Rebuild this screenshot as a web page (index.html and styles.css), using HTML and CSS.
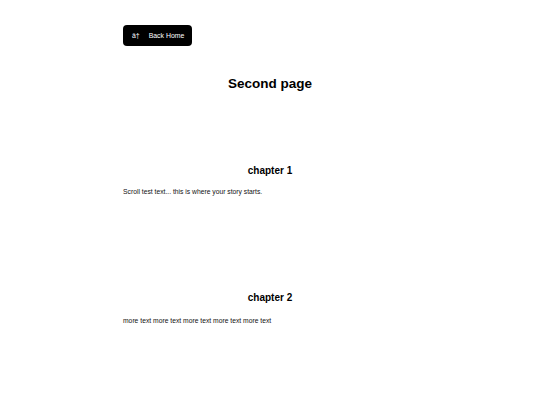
FILE: index.html
```html
<!DOCTYPE html>
<html>
<head>
<meta charset="utf-8">
<link rel="stylesheet" href="styles.css">
</head>
<body>
<div class="page">
  <a class="back" href="#"><span class="arrow">â†</span><span>Back Home</span></a>
  <h1 class="title">Second page</h1>
  <section class="chapter first">
    <h2 class="chapter-title">chapter 1</h2>
    <p class="text">Scroll test text... this is where your story starts.</p>
  </section>
  <section class="chapter second">
    <h2 class="chapter-title">chapter 2</h2>
    <p class="text text-second">more text more text more text more text more text</p>
  </section>
</div>
</body>
</html>
```

FILE: styles.css
```css
html, body {
  margin: 0;
  padding: 0;
  background: #ffffff;
}
body {
  font-family: "Liberation Sans", Arial, sans-serif;
  color: #000;
}
.page {
  width: 294px;
  margin: 0 auto;
  padding-top: 25px;
  display: flex;
  flex-direction: column;
  align-items: flex-start;
}
.back {
  display: inline-flex;
  align-items: center;
  gap: 9px;
  height: 21px;
  width: 69px;
  box-sizing: border-box;
  padding: 0 0 0 9px;
  background: #000;
  color: #fff;
  border-radius: 4px;
  font-size: 6.9px;
  text-decoration: none;
  white-space: nowrap;
}
.title {
  align-self: stretch;
  text-align: center;
  font-size: 13.5px;
  font-weight: bold;
  margin: 29.5px 0 0;
}
.chapter {
  align-self: stretch;
}
.chapter-title {
  text-align: center;
  font-size: 10px;
  font-weight: bold;
  margin: 0;
}
.first { margin-top: 74px; }
.second { margin-top: 97px; }
.text {
  font-size: 6.75px;
  margin: 12px 0 0;
  color: #111;
}
.text-second {
  margin-top: 14px;
}
```
